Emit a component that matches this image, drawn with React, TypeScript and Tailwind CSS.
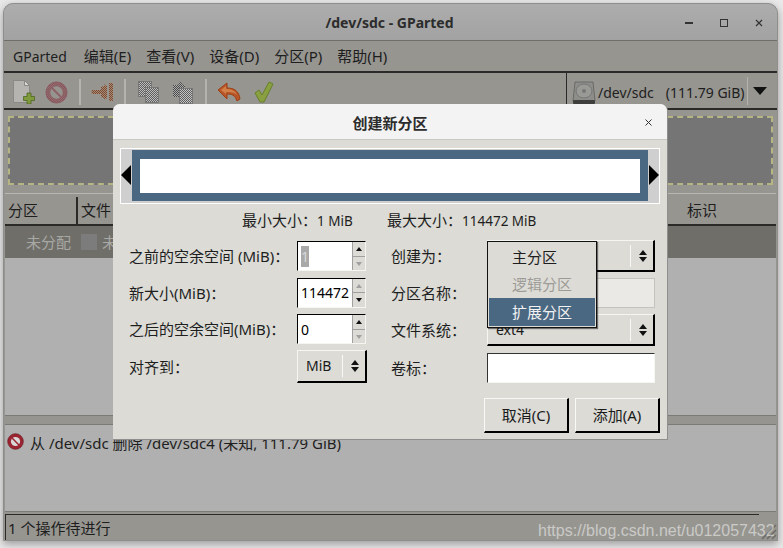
import React from "react";

const font = "font-['Noto_Sans','Noto_Sans_CJK_SC',sans-serif]";

const Checker = ({ id, a, b }: { id: string; a: string; b: string }) => (
  <pattern id={id} width="2" height="2" patternUnits="userSpaceOnUse">
    <rect width="2" height="2" fill={b} />
    <rect width="1" height="1" fill={a} />
    <rect x="1" y="1" width="1" height="1" fill={a} />
  </pattern>
);

const NewIcon = () => (
  <svg width="22" height="24" viewBox="0 0 22 24">
    <path d="M.5.5h11l5 5v17H.5z" fill="#b5b4b0" stroke="#8a8985" />
    <path d="M11.5.5v5h5z" fill="#d8d7d3" stroke="#8a8985" />
    <path d="M14 13h4v3.500h3.500v4H18V24h-4v-3.500h-3.500v-4H14z" fill="#7f9a3c" stroke="#4f6420" strokeWidth=".8" />
  </svg>
);

const DeleteIcon = ({ size, disabled }: { size: number; disabled?: boolean }) => (
  <svg width={size} height={size} viewBox="0 0 24 24">
    <defs>
      <Checker id="delChk" a="#7a2a35" b="#a09a98" />
    </defs>
    <circle cx="12" cy="12" r="11" fill={disabled ? "url(#delChk)" : "#9b2430"} stroke={disabled ? "#8a5a60" : "#6e1a22"} />
    <circle cx="12" cy="12" r="6.500" fill={disabled ? "#96948f" : "#d8d8d8"} />
    <path d="M6 7.500 7.500 6 18 16.500 16.500 18z" fill={disabled ? "url(#delChk)" : "#9b2430"} />
  </svg>
);

const ResizeIcon = () => (
  <svg width="23" height="18" viewBox="0 0 23 18">
    <defs>
      <Checker id="arrChk" a="#7a4a38" b="#a88a70" />
    </defs>
    <path d="M1 7h9V4l3-1V1l2 2 1-1v14l-1-1-2 2v-2l-3-1v-3H1q-1-2 0-4zM18 0h4v18h-4z" fill="url(#arrChk)" />
  </svg>
);

const CopyIcon = () => (
  <svg width="21" height="22" viewBox="0 0 21 22">
    <defs>
      <Checker id="cpChk" a="#5e5e5e" b="#bcbcbc" />
    </defs>
    <rect x="0.5" y="0.5" width="13" height="15" fill="url(#cpChk)" stroke="#777" />
    <rect x="7.500" y="6.500" width="13" height="15" fill="url(#cpChk)" stroke="#777" />
  </svg>
);

const PasteIcon = () => (
  <svg width="21" height="24" viewBox="0 0 21 24">
    <defs>
      <Checker id="psChk" a="#4c4c4c" b="#a8a8a8" />
      <Checker id="psChk2" a="#5e5e5e" b="#c4c4c4" />
    </defs>
    <path d="M1 5h5l2-4 3 4h2v12H1z" fill="url(#psChk)" />
    <rect x="7.500" y="8.500" width="13" height="15" fill="url(#psChk2)" stroke="#777" />
  </svg>
);

const UndoIcon = () => (
  <svg width="24" height="20" viewBox="0 0 24 20">
    <path d="M1 8 10 1v5c7 0 12 3 13 11l-3 2c-2-6-5-7-10-7v5z" fill="#b8562a" stroke="#9c3f12" strokeLinejoin="round" />
    <path d="M4 8l5-4v3c5 0 9 1 11 6-3-3-6-3-11-3v2z" fill="#d08048" />
  </svg>
);

const ApplyIcon = () => (
  <svg width="20" height="22" viewBox="0 0 20 22">
    <path d="M1 12l4-3 3 5L15 1l4 2-9 18H6z" fill="#8aa040" stroke="#66802a" strokeLinejoin="round" />
  </svg>
);

const DiskIcon = () => (
  <svg width="24" height="24" viewBox="0 0 24 24">
    <path d="M3 1h18l2 19H1z" fill="#8d8d8a" stroke="#6a6a68" />
    <ellipse cx="12" cy="10" rx="8" ry="7" fill="#999996" stroke="#777" />
    <circle cx="12" cy="10" r="2" fill="#777" />
    <rect x="1" y="19" width="22" height="4" rx="1" fill="#3e3e3c" />
  </svg>
);

const Sep = ({ className }: { className: string }) => <div className={`h-[26px] w-[2px] bg-[#b4b3ae] ${className}`} />;

const Spin = ({ value, selected }: { value: string; selected?: boolean }) => (
  <div className="flex h-[30px] w-[69px] border border-b-[#f5f5f2] border-l-black border-r-[#f5f5f2] border-t-black bg-white">
    <div className="flex min-w-0 flex-1 items-center pl-[3px] text-[14px] text-black">
      {selected ? <span className="bg-[#a9a9a9] text-[#d8d8d8]">{value}</span> : value}
    </div>
    <div className="flex w-[13px] flex-col border-l border-[#a0a0a0] bg-[#dcdbd6]">
      <div className="flex flex-1 items-center justify-center border-b border-[#a0a0a0]">
        <svg width="6" height="4" viewBox="0 0 6 4">
          <path d="M3 0l3 4H0z" fill={value === "114472" ? "#a0a0a0" : "#111"} />
        </svg>
      </div>
      <div className="flex flex-1 items-center justify-center">
        <svg width="6" height="4" viewBox="0 0 6 4">
          <path d="M0 0h6L3 4z" fill={value === "114472" ? "#111" : "#a0a0a0"} />
        </svg>
      </div>
    </div>
  </div>
);

const Updown = () => (
  <div className="flex h-[22px] items-center border-l border-[#f8f8f6] pl-[7px]">
    <svg width="10" height="14" viewBox="0 0 10 14">
      <path d="M5 1 9 6H1zM5 13 1 8h8z" fill="#111" />
    </svg>
  </div>
);

const Combo = ({ text, className }: { text: string; className: string }) => (
  <div className={`flex items-center justify-between border border-b-2 border-b-black border-l-[#f5f5f2] border-r-2 border-r-black border-t-[#f5f5f2] bg-[#dcdbd6] text-[14px] text-[#1a1a1a] ${className}`}>
    <span>{text}</span>
    <Updown />
  </div>
);

const Btn = ({ text, w }: { text: string; w: string }) => (
  <div className={`flex h-[35px] items-center justify-center border border-b-2 border-r-2 border-b-black border-l-[#f8f8f6] border-r-black border-t-[#f8f8f6] text-[15px] text-[#1a1a1a] ${w}`}>
    {text}
  </div>
);

export default function App() {
  return (
    <div className={`${font} relative h-[548px] w-[783px] overflow-hidden bg-[#e9e9e9] pl-[3px] pr-[5px] pt-[3px] text-[15px]`}>
      {/* main window */}
      <div className="flex h-[538px] flex-col overflow-hidden rounded-t-[10px] border border-[#8e8e8c] bg-[#969590] shadow-[0_3px_8px_rgba(0,0,0,0.35)]">
        <div className="relative flex h-[37px] shrink-0 items-center justify-center border-b border-[#6f6e6b] bg-gradient-to-b from-[#adadad] to-[#a2a2a2] pr-[2px]">
          <span className="text-[14px] font-bold text-[#2c2c2c]">/dev/sdc - GParted</span>
          <div className="absolute right-[14px] top-[15px] flex items-center gap-[27px] text-[#2c2c2c]">
            <div className="h-[1.5px] w-[8px] bg-[#333]" />
            <div className="size-[8px] border-[1.5px] border-[#333]" />
            <svg width="8" height="8" viewBox="0 0 8 8">
              <path d="M1 1l6 6M7 1 1 7" stroke="#333" strokeWidth="1.2" />
            </svg>
          </div>
        </div>

        <div className="flex h-[32px] shrink-0 items-center gap-[15px] border-b-2 border-[#2b2a28] pl-[9px] pt-[1px] text-[#1e1e1e]">
          <span className="mr-[2px] text-[14px]">GParted</span>
          <span>编辑(E)</span>
          <span>查看(V)</span>
          <span>设备(D)</span>
          <span>分区(P)</span>
          <span>帮助(H)</span>
        </div>

        <div className="flex h-[37px] shrink-0 border-b-2 border-[#2b2a28]">
          <div className="flex flex-1 items-center pl-[9px] pt-[3px]">
            <NewIcon />
            <div className="ml-[10px]">
              <DeleteIcon size={23} disabled />
            </div>
            <Sep className="ml-[11px]" />
            <div className="ml-[10px]">
              <ResizeIcon />
            </div>
            <Sep className="ml-[10px]" />
            <div className="ml-[12px]">
              <CopyIcon />
            </div>
            <div className="ml-[13px]">
              <PasteIcon />
            </div>
            <Sep className="ml-[12px]" />
            <div className="ml-[10px]">
              <UndoIcon />
            </div>
            <div className="ml-[13px]">
              <ApplyIcon />
            </div>
          </div>
          <div className="flex w-[211px] items-center border-l border-[#2b2a28] pl-[5px] text-[14px] text-[#1e1e1e]">
            <div className="mt-[4px]">
              <DiskIcon />
            </div>
            <span className="ml-[2px] mt-[3px]">/dev/sdc</span>
            <span className="ml-[12px] mt-[3px]">(111.79 GiB)</span>
            <div className="ml-[2px] h-[28px] w-[1px] bg-[#b4b3ae]" />
            <svg className="ml-[5px]" width="14" height="8" viewBox="0 0 14 8">
              <path d="M0 0h14L7 8z" fill="#111" />
            </svg>
          </div>
        </div>

        {/* partition graph */}
        <div className="h-[83px] shrink-0 px-[4px] py-[6px]">
          <div className="h-[69px] border-2 border-dashed border-[#b5b483] bg-[#757575]" />
        </div>

        {/* partition table */}
        <div className="mx-[1px] flex h-[33px] shrink-0 items-center border-b-2 border-t border-b-[#2b2a28] border-t-[#b8b7b2] pt-[3px] text-[#1e1e1e]">
          <div className="flex h-full w-[73px] items-center border-r-2 border-[#2b2a28] pl-[3px]">分区</div>
          <div className="flex h-full flex-1 items-center pl-[3px]">文件</div>
          <div className="w-[90px] pl-[1px]">标识</div>
        </div>
        <div className="mx-[1px] flex h-[32px] shrink-0 items-center bg-[#6f6e69] pl-[21px] text-[#a8a8a4]">
          <span>未分配</span>
          <span className="ml-[10px] size-[16px] bg-[#7c7c7c]" />
          <span className="ml-[5px]">未</span>
        </div>
        <div className="mx-[1px] h-[158px] shrink-0 border-b border-[#7a7a76] bg-[#b0b0b0]" />

        <div className="h-[8px] shrink-0" />

        {/* pending operations */}
        <div className="mx-[1px] flex h-[88px] shrink-0 items-start gap-[6px] border-y border-[#7a7a76] bg-[#b0b0b0] pl-[2px] pt-[8px] text-[15px] leading-[20px] text-[#1e1e1e]">
          <DeleteIcon size={17} />
          <span>从 /dev/sdc 删除 /dev/sdc4 (未知, 111.79 GiB)</span>
        </div>

        <div className="flex h-[28px] shrink-0 items-end">
          <div className="mx-[1px] flex h-[26px] flex-1 items-center border-l border-t border-[#2b2a28] pl-[2px] pt-[2px] text-[#1e1e1e]">
            1 个操作待进行
          </div>
          <div className="w-[17px]" />
        </div>
      </div>

      {/* dialog window */}
      <div className="absolute left-[113px] top-[104px] flex h-[336px] w-[555px] flex-col rounded-t-[7px] border-b border-r border-[#8e8e8c] bg-[#dcdbd6]">
        <div className="relative flex h-[36px] shrink-0 items-center justify-center rounded-t-[7px] border-b border-[#c8c7c2] bg-[#f3f3f3] pt-[3px] text-[15px] font-bold text-[#2c2c2c]">
          创建新分区
          <svg className="absolute right-[15px] top-[15px]" width="7" height="7" viewBox="0 0 7 7">
            <path d="M.5.5l6 6M6.5.5l-6 6" stroke="#333" strokeWidth="1" />
          </svg>
        </div>

        <div className="ml-[7px] mt-[8px] flex h-[56px] w-[540px] items-stretch border border-white bg-[#cfcfcf]">
          <div className="relative mx-[11px] mb-[2px] mt-[1px] flex flex-1 items-center bg-[#4b6882] px-[8px]">
            <div className="h-[34px] w-full bg-white" />
            <div className="absolute -left-[11px] top-[15px] size-0 border-y-[10px] border-r-[10px] border-y-transparent border-r-black" />
            <div className="absolute -right-[11px] top-[15px] size-0 border-y-[10px] border-l-[10px] border-y-transparent border-l-black" />
          </div>
        </div>

        <div className="mt-[5px] flex h-[22px] items-center pl-[129px] text-[#1e1e1e]">
          <span className="w-[145px]">
            最小大小：<span className="text-[13.5px]">1 MiB</span>
          </span>
          <span>
            最大大小：<span className="text-[13.5px]">114472 MiB</span>
          </span>
        </div>

        <div className="mt-[10px] flex pl-[16px]">
          {/* left column */}
          <div className="grid w-[253px] grid-cols-[168px_69px] items-center gap-y-[6px] text-[#1e1e1e]">
            <span>之前的空余空间 (MiB)：</span>
            <Spin value="1" selected />
            <span>新大小(MiB)：</span>
            <Spin value="114472" />
            <span>之后的空余空间(MiB)：</span>
            <Spin value="0" />
            <span>对齐到：</span>
            <Combo text="MiB" className="-mt-[1px] h-[33px] w-[70px] pl-[8px] pr-[5px]" />
          </div>

          {/* right column */}
          <div className="-mt-[1px] ml-[9px] grid grid-cols-[96px_168px] items-center gap-y-[6px] self-start text-[#1e1e1e]">
            <span className="pt-[1px]">创建为：</span>
            <Combo text="" className="h-[32px] w-[168px] pr-[5px]" />
            <span className="pt-[1px]">分区名称：</span>
            <div className="h-[30px] border border-[#c4c3be] bg-[#eae9e5]" />
            <span className="pt-[1px]">文件系统：</span>
            <Combo text="ext4" className="h-[32px] w-[168px] pl-[8px] pr-[5px]" />
            <span className="mt-[1px]">卷标：</span>
            <div className="mt-[1px] h-[30px] border border-b-[#f5f5f2] border-l-[#333] border-r-[#f5f5f2] border-t-[#333] bg-white" />
          </div>
        </div>

        <div className="mt-[15px] flex justify-end gap-[6px] pr-[7px]">
          <Btn text="取消(C)" w="w-[85px]" />
          <Btn text="添加(A)" w="w-[85px]" />
        </div>
      </div>

      {/* open combo popup */}
      <div className="absolute left-[487px] top-[241px] w-[110px] border border-[#111] bg-[#dcdbd6] p-[1px] shadow-[1px_1px_1px_rgba(0,0,0,0.5)]">
        <div className="flex h-[28px] items-center pl-[23px] text-[#1e1e1e]">主分区</div>
        <div className="flex h-[27px] items-center pl-[23px] text-[#9c9b97]">逻辑分区</div>
        <div className="flex h-[28px] items-center bg-[#4b6882] pl-[23px] text-[#f2f2f2]">扩展分区</div>
      </div>

      {/* resize grip and blog watermark */}
      <svg className="absolute left-[760px] top-[523px]" width="18" height="18" viewBox="0 0 18 18">
        <path d="M2 16 16 2M7 16 16 7M12 16l4-4" stroke="#6a6a66" strokeWidth="1.500" />
      </svg>
      <div className="absolute left-[538px] top-[519px] font-['Liberation_Sans',sans-serif] text-[16px] text-[#ffffff]/50">
        https://blog.csdn.net/u012057432
      </div>
    </div>
  );
}
